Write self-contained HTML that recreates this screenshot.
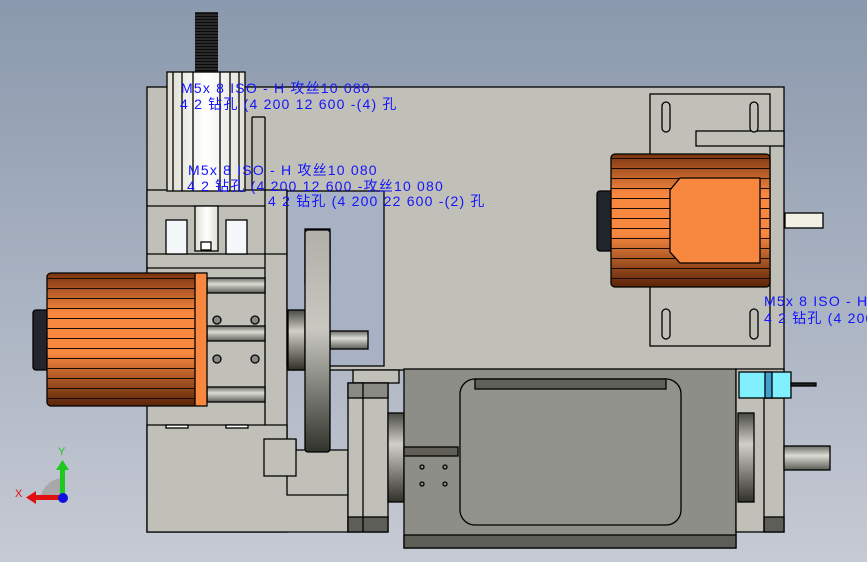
<!DOCTYPE html>
<html><head><meta charset="utf-8"><style>
html,body{margin:0;padding:0;width:867px;height:562px;overflow:hidden}
svg{display:block}
text{font-family:"Liberation Sans","Noto Sans CJK SC",sans-serif;fill:#1414ff;font-size:14px;letter-spacing:1.2px}
</style></head><body>
<svg width="867" height="562" viewBox="0 0 867 562" xmlns="http://www.w3.org/2000/svg">
<defs>
<linearGradient id="bg" x1="0" y1="0" x2="0" y2="1"><stop offset="0" stop-color="#8a99ad"/><stop offset="1" stop-color="#c6cad4"/></linearGradient>
<linearGradient id="rod" x1="0" y1="0" x2="0" y2="1"><stop offset="0" stop-color="#6a6c66"/><stop offset=".4" stop-color="#dcdcd4"/><stop offset="1" stop-color="#5a5c56"/></linearGradient>
<linearGradient id="fly" x1="0" y1="0" x2="0" y2="1"><stop offset="0" stop-color="#b0b0a8"/><stop offset=".45" stop-color="#c8c8c0"/><stop offset="1" stop-color="#30322c"/></linearGradient>
<linearGradient id="hub" x1="0" y1="0" x2="0" y2="1"><stop offset="0" stop-color="#4a4a44"/><stop offset=".35" stop-color="#d0d0c8"/><stop offset="1" stop-color="#303028"/></linearGradient>
<linearGradient id="org" x1="0" y1="0" x2="0" y2="1"><stop offset="0" stop-color="#7a3410"/><stop offset=".3" stop-color="#f88840"/><stop offset=".6" stop-color="#f88840"/><stop offset="1" stop-color="#5a2408"/></linearGradient>
<linearGradient id="cyl" x1="0" y1="0" x2="1" y2="0"><stop offset="0" stop-color="#dcdcd0"/><stop offset=".5" stop-color="#ffffff"/><stop offset="1" stop-color="#e0e0d6"/></linearGradient>
<linearGradient id="bar" x1="0" y1="0" x2="0" y2="1"><stop offset="0" stop-color="#505050"/><stop offset="1" stop-color="#a8a8a0"/></linearGradient>
<pattern id="fins" width="4" height="10" patternUnits="userSpaceOnUse"><rect width="4" height="10" fill="none"/><rect y="8" width="4" height="1" fill="#1a0a00"/></pattern>
<pattern id="thr" width="23" height="3" patternUnits="userSpaceOnUse"><rect width="23" height="3" fill="#2a2a2a"/><rect y="1" width="23" height="1" fill="#0a0a0a"/></pattern>
</defs>
<rect width="867" height="562" fill="url(#bg)"/>
<g stroke="#000" stroke-width="1.3">
<rect x="147" y="87" width="637" height="283" fill="#c0c0b8"/>
<rect x="147" y="190" width="140" height="342" fill="#c0c0b8"/>
<rect x="287" y="191" width="97" height="175" fill="#a8b2c4"/>
<rect x="305" y="229" width="25" height="55" fill="url(#bar)"/>
<line x1="147" y1="206" x2="265" y2="206"/>
<line x1="252" y1="117" x2="252" y2="190"/>
<line x1="252" y1="117" x2="265" y2="117"/>
<line x1="265" y1="117" x2="265" y2="425"/>
<line x1="147" y1="254" x2="287" y2="254"/>
<line x1="147" y1="268" x2="265" y2="268"/>
<rect x="195" y="12" width="23" height="60" fill="url(#thr)" stroke="none"/>
<rect x="167" y="72" width="78" height="119" fill="url(#cyl)"/>
<line x1="173" y1="72" x2="173" y2="191"/><line x1="182" y1="72" x2="182" y2="191"/><line x1="193" y1="72" x2="193" y2="191"/>
<line x1="220" y1="72" x2="220" y2="191"/><line x1="230" y1="72" x2="230" y2="191"/><line x1="239" y1="72" x2="239" y2="191"/>
<rect x="166" y="220" width="21" height="34" fill="#f4f8fa"/>
<rect x="226" y="220" width="21" height="34" fill="#f4f8fa"/>
<rect x="195" y="206" width="23" height="45" fill="url(#cyl)"/>
<rect x="201" y="242" width="10" height="8" fill="#fff"/>
<rect x="207" y="278" width="58" height="15" fill="url(#rod)"/>
<rect x="207" y="326" width="58" height="15" fill="url(#rod)"/>
<rect x="207" y="387" width="58" height="15" fill="url(#rod)"/>
<path d="M147 425 H287 V440 H296 V450 H348 V532 H147 Z" fill="#c0c0b8"/>
<path d="M287 476 V495 H348" fill="none"/>
<rect x="264" y="439" width="32" height="37" fill="#c0c0b8"/>
<rect x="166" y="425" width="22" height="3" fill="#fff"/><rect x="226" y="425" width="22" height="3" fill="#fff"/>
<rect x="288" y="310" width="17" height="60" fill="url(#hub)"/>
<rect x="330" y="331" width="38" height="18" fill="url(#rod)"/>
<rect x="305" y="230" width="25" height="222" rx="3" fill="url(#fly)"/>
<rect x="33" y="310" width="17" height="60" rx="3" fill="#22252e"/>
<rect x="47" y="273" width="150" height="133" rx="4" fill="url(#org)"/>
<rect x="47" y="273" width="150" height="133" fill="url(#fins)" stroke="none"/>
<rect x="195" y="273" width="12" height="133" fill="#f88840"/>
<circle cx="217" cy="320" r="4" fill="#888"/><circle cx="255" cy="320" r="4" fill="#888"/>
<circle cx="217" cy="359" r="4" fill="#888"/><circle cx="255" cy="359" r="4" fill="#888"/>
<rect x="650" y="94" width="120" height="252" fill="#c0c0b8"/>
<rect x="696" y="131" width="88" height="15" fill="#c0c0b8"/>
<rect x="662" y="102" width="8" height="30" rx="4" fill="#c0c0b8"/><rect x="750" y="102" width="8" height="30" rx="4" fill="#c0c0b8"/>
<rect x="662" y="309" width="8" height="30" rx="4" fill="#c0c0b8"/><rect x="750" y="309" width="8" height="30" rx="4" fill="#c0c0b8"/>
<rect x="597" y="191" width="17" height="60" rx="3" fill="#22252e"/>
<rect x="611" y="154" width="159" height="133" rx="4" fill="url(#org)"/>
<rect x="611" y="154" width="159" height="133" fill="url(#fins)" stroke="none"/>
<path d="M680 178 H760 V263 H680 L670 252 V190 Z" fill="#f88840"/>
<rect x="785" y="213" width="38" height="15" fill="#f0f0e4"/>
<rect x="353" y="370" width="46" height="13" fill="#c0c0b8"/>
<rect x="348" y="383" width="40" height="149" fill="#c0c0b8"/>
<rect x="348" y="383" width="40" height="15" fill="#8a8a84"/><rect x="348" y="517" width="40" height="15" fill="#5e5e58"/>
<line x1="363" y1="383" x2="363" y2="532"/>
<rect x="388" y="413" width="16" height="89" fill="url(#hub)"/>
<rect x="404" y="369" width="332" height="179" fill="#8e8e88"/>
<rect x="404" y="535" width="332" height="13" fill="#5e5e58"/>
<rect x="460" y="379" width="221" height="146" rx="15" fill="#92928c"/>
<rect x="475" y="379" width="191" height="10" fill="#606058"/>
<rect x="404" y="447" width="54" height="9" fill="#606058"/>
<circle cx="422" cy="467" r="2" fill="none"/><circle cx="445" cy="467" r="2" fill="none"/><circle cx="422" cy="484" r="2" fill="none"/><circle cx="445" cy="484" r="2" fill="none"/>
<rect x="736" y="369" width="48" height="163" fill="#c0c0b8"/>
<rect x="764" y="384" width="20" height="14" fill="#8a8a84"/><rect x="764" y="517" width="20" height="15" fill="#5e5e58"/>
<line x1="764" y1="384" x2="764" y2="532"/>
<rect x="738" y="413" width="16" height="89" fill="url(#hub)"/>
<rect x="784" y="446" width="46" height="24" fill="url(#rod)"/>
<rect x="739" y="372" width="52" height="26" fill="#80f0ff"/>
<rect x="765" y="372" width="7" height="26" fill="#40a0d0"/>
<rect x="791" y="383" width="25" height="3" fill="#222"/>
</g>
<path d="M40 500 A24 24 0 0 1 62 478 L62 500 Z" fill="#a8a8a8"/>
<rect x="60" y="468" width="5" height="32" fill="#1ec81e"/><path d="M56 470 L62.5 460 L69 470 Z" fill="#1ec81e"/>
<rect x="34" y="495" width="28" height="5" fill="#e01010"/><path d="M36 491 L26 497.5 L36 504 Z" fill="#e01010"/>
<circle cx="63" cy="498" r="5" fill="#1010e0"/>
<text x="58" y="455" style="fill:#1ec81e;font-size:11px">Y</text>
<text x="15" y="497" style="fill:#e01010;font-size:11px">X</text>
<text x="181" y="93">M5x 8 ISO - H 攻丝10 080</text>
<text x="180" y="109">4 2 钻孔 (4 200 12 600 -(4) 孔</text>
<text x="188" y="175">M5x 8 ISO - H 攻丝10 080</text>
<text x="187" y="191">4 2 钻孔 (4 200 12 600 -攻丝10 080</text>
<text x="268" y="206">4 2 钻孔 (4 200 22 600 -(2) 孔</text>
<text x="764" y="306">M5x 8 ISO - H 攻</text>
<text x="764" y="323">4 2 钻孔 (4 200</text>
</svg>
</body></html>
